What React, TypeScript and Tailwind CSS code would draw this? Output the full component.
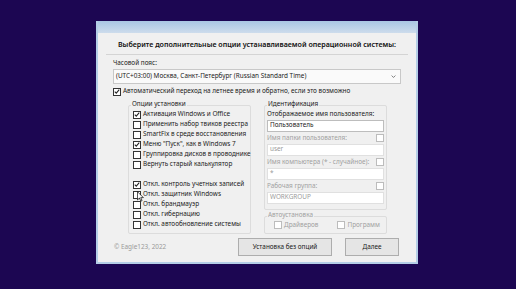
import React from 'react'

const font = { fontFamily: '"Noto Sans", "Open Sans", sans-serif' }

const Check = ({ checked = false, disabled = false }: { checked?: boolean; disabled?: boolean }) => (
  <span
    className={`flex items-center justify-center w-[8px] h-[8px] shrink-0 border bg-white ${
      disabled ? 'border-[#bcbcbc]' : 'border-[#333]'
    }`}
  >
    {checked && (
      <svg viewBox="0 0 8 8" className="w-[7px] h-[7px]">
        <path d="M1 4.2 L3 6.2 L7 1.5" fill="none" stroke="#222" strokeWidth="1.4" />
      </svg>
    )}
  </span>
)

const CheckRow = ({ label, checked }: { label: string; checked?: boolean }) => (
  <div className="flex items-center gap-[2px] h-[10px]">
    <Check checked={checked} />
    <span className="text-[#1a1a1a] leading-none whitespace-nowrap">{label}</span>
  </div>
)

const options = [
  { label: 'Активация Windows и Office', checked: true },
  { label: 'Применить набор твиков реестра' },
  { label: 'SmartFix в среде восстановления' },
  { label: 'Меню "Пуск", как в Windows 7', checked: true },
  { label: 'Группировка дисков в проводнике' },
  { label: 'Вернуть старый калькулятор' },
  null,
  { label: 'Откл. контроль учетных записей', checked: true },
  { label: 'Откл. защитник Windows' },
  { label: 'Откл. брандмауэр' },
  { label: 'Откл. гибернацию' },
  { label: 'Откл. автообновление системы' },
]

const Field = ({
  label,
  value,
  disabled,
  box,
}: {
  label: string
  value: string
  disabled?: boolean
  box?: boolean
}) => (
  <div className="flex flex-col">
    <div className="flex items-center justify-between h-[9px]">
      <span className={`leading-none ${disabled ? 'text-[#a0a0a0]' : 'text-[#1a1a1a]'}`}>{label}</span>
      {box && <Check disabled />}
    </div>
    <div
      className={`mt-[1px] h-[12px] px-[2px] flex items-center border bg-white leading-none ${
        disabled ? 'border-[#e0e0e0] text-[#9a9a9a]' : 'border-[#bdbdbd] text-[#1a1a1a]'
      }`}
    >
      {value}
    </div>
  </div>
)

const GroupBox = ({
  title,
  className,
  muted,
  children,
}: {
  title: string
  className: string
  muted?: boolean
  children: React.ReactNode
}) => (
  <div className={`relative border border-[#dcdcdc] rounded-[2px] ${className}`}>
    <span
      className={`absolute left-[2px] top-[-5px] px-[1px] bg-[#f0f0f0] leading-none ${
        muted ? 'text-[#a0a0a0]' : 'text-[#1a1a1a]'
      }`}
    >
      {title}
    </span>
    {children}
  </div>
)

export default function App() {
  return (
    <div className="w-[516px] h-[289px] bg-[#1c0652] overflow-hidden pt-[21px] pl-[96px]" style={font}>
      <div className="relative w-[322px] h-[243px] flex flex-col bg-[#f0f0f0] border-x-2 border-b-2 border-[#b4cde6] text-[6.4px]">
        {/* title bar */}
        <div className="h-[12px] bg-gradient-to-b from-[#a9c6e3] to-[#cddcec]" />

        {/* heading */}
        <div className="mt-[8px] text-center text-[7.1px] font-semibold text-[#111] leading-none">
          Выберите дополнительные опции устанавливаемой операционной системы:
        </div>
        <div className="mx-[8px] mt-[6px] h-px bg-[#d4d4d4]" />

        <div className="px-[15px] mt-[5px] flex flex-col">
          <span className="text-[#1a1a1a] leading-none">Часовой пояс:</span>
          <div className="mt-[2px] h-[15px] flex items-center justify-between pl-[2px] pr-[4px] border border-[#c8c8c8] bg-[#fafafa] text-[#1a1a1a]">
            <span className="leading-none">(UTC+03:00) Москва, Санкт-Петербург (Russian Standard Time)</span>
            <svg viewBox="0 0 8 8" className="w-[5px] h-[5px]">
              <path d="M1 2.5 L4 5.5 L7 2.5" fill="none" stroke="#555" strokeWidth="1.2" />
            </svg>
          </div>
          <div className="mt-[3px]">
            <CheckRow label="Автоматический переход на летнее время и обратно, если это возможно" checked />
          </div>
        </div>

        {/* groups */}
        <div className="mt-[8px] flex gap-[13px] pl-[30px]">
          <GroupBox title="Опции установки" className="w-[123px] h-[129px] pt-[4px] pl-[4px]">
            {options.map((o, i) =>
              o ? <CheckRow key={i} label={o.label} checked={o.checked} /> : <div key={i} className="h-[10px]" />
            )}
          </GroupBox>

          <div className="flex flex-col w-[123px]">
            <GroupBox title="Идентификация" className="h-[105px] pt-[4px] px-[2px] flex flex-col gap-[2px]">
              <Field label="Отображаемое имя пользователя:" value="Пользователь" />
              <Field label="Имя папки пользователя:" value="user" disabled box />
              <Field label="Имя компьютера (* - случайное):" value="*" disabled box />
              <Field label="Рабочая группа:" value="WORKGROUP" disabled box />
            </GroupBox>
            <GroupBox title="Автоустановка" muted className="mt-[6px] h-[18px] flex items-center pl-[9px] pt-[1px]">
              <div className="flex items-center gap-[2px] text-[#a0a0a0] leading-none">
                <Check disabled />
                <span>Драйверов</span>
              </div>
              <div className="ml-[19px] flex items-center gap-[2px] text-[#a0a0a0] leading-none">
                <Check disabled />
                <span>Программ</span>
              </div>
            </GroupBox>
          </div>
        </div>

        {/* footer */}
        <div className="mt-auto mb-[6px] flex items-center pl-[16px] pr-[17px]">
          <span className="text-[#9a9a9a] leading-none">© Eagle123, 2022</span>
          <button className="ml-auto w-[94px] h-[18px] border border-[#adadad] bg-[#e5e5e5] text-[#1a1a1a] leading-none">
            Установка без опций
          </button>
          <button className="ml-[13px] w-[54px] h-[18px] border border-[#adadad] bg-[#e5e5e5] text-[#1a1a1a] leading-none">
            Далее
          </button>
        </div>

        {/* mouse cursor */}
        <svg viewBox="0 0 8 12" className="absolute left-[39px] top-[170px] w-[7px] h-[11px]">
          <path d="M0.5 0.5 L0.5 10 L2.8 7.8 L4.4 11.3 L5.8 10.7 L4.3 7.3 L7.3 7.3 Z" fill="#fff" stroke="#000" strokeWidth="0.8" />
        </svg>
      </div>
    </div>
  )
}
